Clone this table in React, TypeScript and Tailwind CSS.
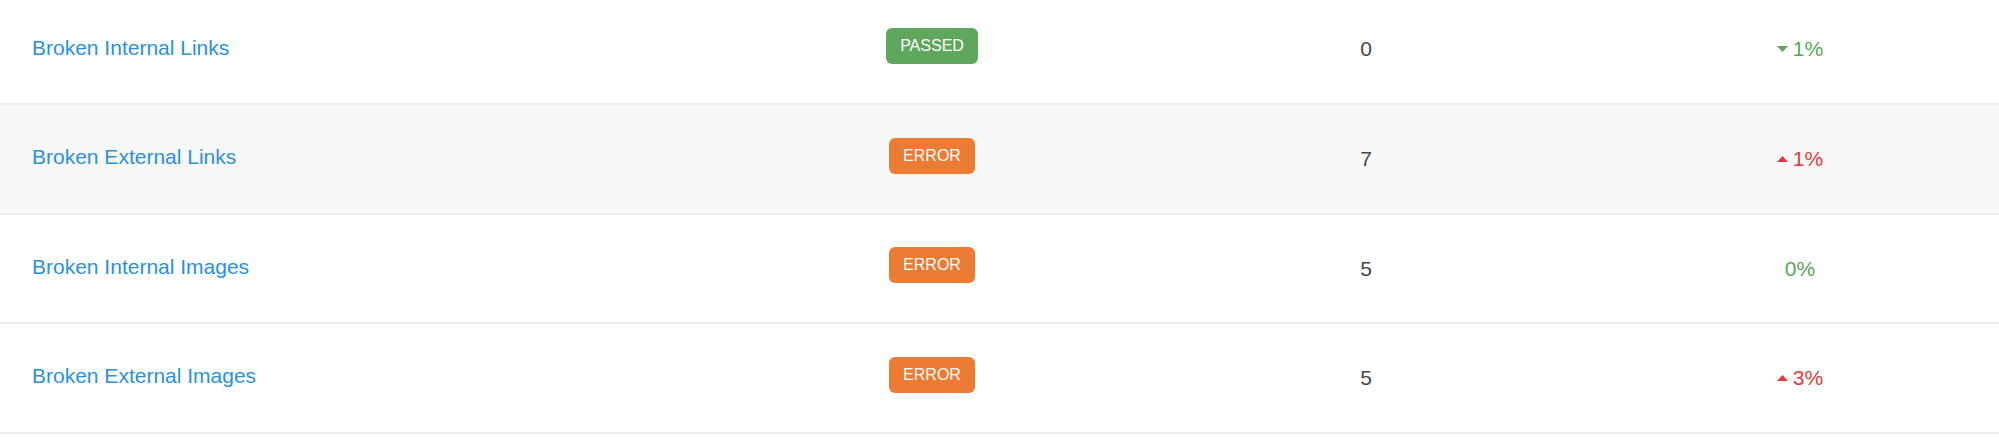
const rows = [
  { name: "Broken Internal Links", status: "PASSED", count: 0, change: "1%", trend: "down" },
  { name: "Broken External Links", status: "ERROR", count: 7, change: "1%", trend: "up" },
  { name: "Broken Internal Images", status: "ERROR", count: 5, change: "0%", trend: "none" },
  { name: "Broken External Images", status: "ERROR", count: 5, change: "3%", trend: "up" },
]

const Caret = ({ up }: { up: boolean }) => (
  <svg width="11" height="6" viewBox="0 0 11 6" className="shrink-0" fill="currentColor">
    {up ? <path d="M5.5 0L11 6H0z" /> : <path d="M0 0h11L5.5 6z" />}
  </svg>
)

const App = () => {
  return (
    <div className="w-full bg-white font-['Liberation_Sans',Arial,sans-serif] -mt-[4.6px]">
      {rows.map((row, i) => (
        <div
          key={row.name}
          className={`grid grid-cols-[715px_434px_434px_1fr] items-center h-[109.6px] border-b-2 border-[#ececec] ${
            i === 1 ? "bg-[#f8f8f8]" : "bg-white"
          }`}
        >
          <div className="pl-[32px]">
            <a href="#" className="text-[21px] text-[#2b91dc] leading-none">
              {row.name}
            </a>
          </div>

          <div className="flex justify-center">
            <span
              className={`mb-[6px] h-[36px] px-[14.5px] rounded-[6px] flex items-center text-white text-[16px] leading-none ${
                row.status === "PASSED" ? "bg-[#5fa75c]" : "bg-[#ec7b34]"
              }`}
            >
              {row.status}
            </span>
          </div>

          <div className="text-center text-[21px] text-[#474747]">{row.count}</div>

          <div className="pl-[18px] flex justify-center">
            <span
              className={`flex items-center gap-[5px] text-[21px] ${
                row.trend === "up" ? "text-[#e3393c]" : "text-[#5aa65a]"
              }`}
            >
              {row.trend !== "none" && <Caret up={row.trend === "up"} />}
              {row.change}
            </span>
          </div>
        </div>
      ))}
    </div>
  )
}

export default App
